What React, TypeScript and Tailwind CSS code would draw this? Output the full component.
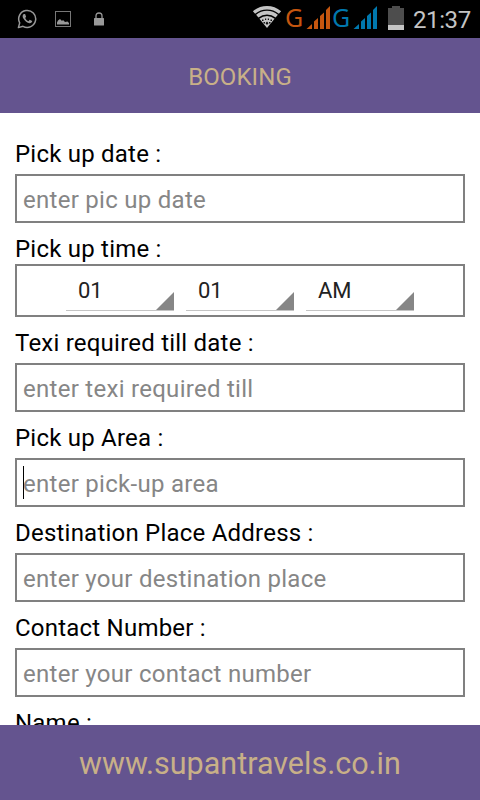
import { useState } from 'react';

type Field = { id: string; label: string; placeholder: string; focused?: boolean };

const FIELDS: Field[] = [
  { id: 'till', label: 'Texi required till date :', placeholder: 'enter texi required till' },
  { id: 'area', label: 'Pick up Area :', placeholder: 'enter pick-up area', focused: true },
  { id: 'destination', label: 'Destination Place Address :', placeholder: 'enter your destination place' },
  { id: 'contact', label: 'Contact Number :', placeholder: 'enter your contact number' },
  { id: 'name', label: 'Name :', placeholder: 'enter your name' },
];

function WhatsAppIcon() {
  return (
    <svg width="20" height="20" viewBox="0 0 20 20" className="mt-[9px] ml-[17px]">
      <path
        d="M1.400 18.600L2.700 13.900A8.500 8.500 0 1 1 6 17.300Z"
        fill="none"
        stroke="#999"
        strokeWidth="1.500"
        strokeLinejoin="round"
      />
      <path
        d="M6.900 5C5.300 5.800 5.300 7.800 6.400 9.600C7.900 12.100 10.200 13.900 12.600 14.300C14 14.400 15.100 13.500 15.200 12.100L12.700 10.800L11.500 12.200C10 11.600 8.800 10.400 8.200 9L9.100 7.800L8.100 5.100Z"
        fill="#999"
      />
    </svg>
  );
}

function WifiIcon() {
  return (
    <svg width="30" height="23" viewBox="0 0 30 23" className="mt-[6px]" fill="#c4c4c4">
      <path d="M0.900 5.200A22 22 0 0 1 29.100 5.200L26.900 7.800A18.500 18.500 0 0 0 3.100 7.800Z" />
      <path d="M4.100 8.800A17 17 0 0 1 25.900 8.800L23.600 11.500A13.500 13.500 0 0 0 6.400 11.500Z" />
      <path d="M7.400 12.700A12 12 0 0 1 22.600 12.700L15 22Z" />
      <path
        d="M10 13.500H11.500V15H10ZM18.500 13.500H20V15H18.500ZM11.500 16H13V17.500H11.500ZM17 16H18.500V17.500H17ZM15 15.500L16.500 17.300L15 19L13.500 17.300ZM13 12.500H14.200V14H13ZM15.800 12.500H17V14H15.800Z"
        fill="#111"
      />
    </svg>
  );
}

function SignalIcon({ className }: { className: string }) {
  return (
    <svg width="24" height="23" viewBox="0 0 24 23" className={className} fill="currentColor">
      <path d="M0.500 23L6 18V23ZM8 15.500L12 12V23H8ZM14 10L18 6.500V23H14ZM20 4L24 0V23H20Z" />
    </svg>
  );
}

function StatusBar() {
  return (
    <div className="flex h-[38px] shrink-0 items-start bg-black">
      <WhatsAppIcon />
      <svg width="16" height="16" viewBox="0 0 16 16" className="mt-[11px] ml-[18px]">
        <rect x="0.500" y="0.500" width="15" height="15" fill="none" stroke="#777" />
        <path d="M2 13.500V11.500L3 9.500L5 8L7 10L8 9L10 11L12.500 10.500L14 12V13.500Z" fill="#999" />
      </svg>
      <svg width="10" height="14" viewBox="0 0 10 14" className="mt-[12px] ml-[23px]">
        <path d="M2 7V4Q2 1 5 1Q8 1 8 4V7" fill="none" stroke="#999" strokeWidth="1.300" />
        <rect y="6" width="10" height="7.500" rx="0.500" fill="#999" />
      </svg>
      <div className="ml-auto flex items-start pr-[9px]">
        <WifiIcon />
        <span className="mt-[3px] ml-[3px] w-[17px] font-['Noto_Sans',sans-serif] text-[25px] leading-[28px] text-[#c5560f]">
          G
        </span>
        <SignalIcon className="mt-[6px] ml-[4px] text-[#c5560f]" />
        <span className="mt-[3px] ml-[2px] w-[17px] font-['Noto_Sans',sans-serif] text-[25px] leading-[28px] text-[#0078ae]">
          G
        </span>
        <SignalIcon className="mt-[6px] ml-[4px] text-[#0078ae]" />
        <svg width="16" height="24" viewBox="0 0 16 24" className="mt-[6px] ml-[11px]">
          <path d="M0 2H4V0H12V2H16V19H0Z" fill="#4d4d4d" />
          <rect y="19" width="16" height="5" fill="#c4c4c4" />
        </svg>
        <span className="mt-[6px] ml-[9px] w-[58px] text-[24px] leading-[28px] tracking-[-0.4px] text-[#c4c4c4]">
          21:37
        </span>
      </div>
    </div>
  );
}

function TextField({ id, label, placeholder, focused }: Field) {
  const [value, setValue] = useState('');

  return (
    <div>
      <label htmlFor={id} className="block h-[34px] text-[24px] leading-[28px] tracking-[0.22px] text-black">
        {label}
      </label>
      <div className="relative">
        <input
          id={id}
          value={value}
          onChange={e => setValue(e.target.value)}
          placeholder={placeholder}
          className="block h-[49px] w-full border-2 border-[#808080] pt-[2px] pl-[6px] text-[24px] tracking-[0.28px] text-black outline-none placeholder:text-[#868686]"
        />
        {focused && <span className="absolute top-[8px] left-[8px] h-[33px] w-px bg-black" />}
      </div>
    </div>
  );
}

function Spinner({ value }: { value: string }) {
  return (
    <button className="flex h-[45px] w-[108px] items-end justify-between border-b border-[#c4c4c4] pl-[12px] text-left">
      <span className="mb-[6px] text-[22px] leading-[26px] text-[#222]">{value}</span>
      <svg width="18" height="18" viewBox="0 0 18 18" fill="#868686">
        <path d="M18 0V18H0Z" />
      </svg>
    </button>
  );
}

export default function App() {
  return (
    <div className="flex h-[800px] w-[480px] flex-col overflow-hidden bg-white font-[Roboto,sans-serif]">
      <StatusBar />
      <header className="flex h-[75px] shrink-0 items-center justify-center bg-[#64548f] pt-[2px] text-[24px] tracking-[0.1px] text-[#c8b088]">
        BOOKING
      </header>

      <main className="flex min-h-0 flex-1 flex-col gap-3 overflow-hidden px-[15px] pt-[27px]">
        <TextField id="date" label="Pick up date :" placeholder="enter pic up date" />
        <div>
          <div className="h-[29px] text-[24px] leading-[28px] tracking-[0.22px] text-black">Pick up time :</div>
          <div className="flex h-[53px] justify-center gap-3 border-2 border-[#808080]">
            <Spinner value="01" />
            <Spinner value="01" />
            <Spinner value="AM" />
          </div>
        </div>
        {FIELDS.map(f => (
          <TextField key={f.id} {...f} />
        ))}
      </main>

      <footer className="flex h-[75px] shrink-0 items-center justify-center bg-[#64548f] pt-[2px] text-[30.5px] text-[#c8b088]">
        www.supantravels.co.in
      </footer>
    </div>
  );
}
